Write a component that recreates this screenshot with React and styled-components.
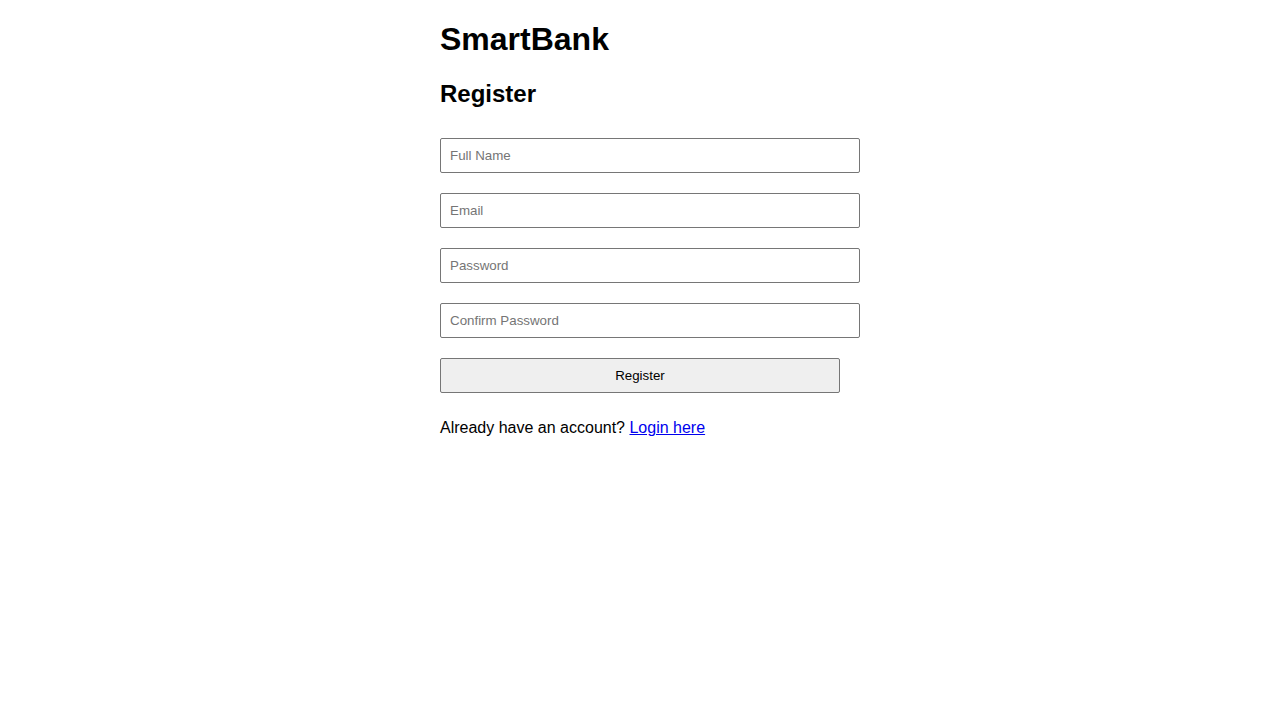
import React from 'react'
import styled, { createGlobalStyle } from 'styled-components'

const GlobalStyle = createGlobalStyle`
    body {
        margin: 0;
        background: #ffffff;
        font-family: "Liberation Sans", Arial, sans-serif;
        color: #000000;
    }
`;

const Page = styled.div`
    width: 400px;
    margin: 0 auto;
    padding-top: 21px;
`;

const Brand = styled.h1`
    font-size: 32px;
    font-weight: 700;
    margin: 0 0 22px;
`;

const Title = styled.h2`
    font-size: 24px;
    font-weight: 700;
    margin: 0 0 30px;
`;

const Form = styled.form`
    display: flex;
    flex-direction: column;
    align-items: flex-start;
    gap: 20px;
`;

const Input = styled.input`
    width: 100%;
    padding: 9px;
    font-family: "Liberation Sans", Arial, sans-serif;
    font-size: 13.33px;
    line-height: 15px;
    border: 1px solid #767676;
    border-radius: 2px;
    background: #ffffff;
    margin: 0;

    &::placeholder {
        color: #757575;
    }
`;

const Button = styled.button`
    width: 100%;
    height: 35px;
    font-family: "Liberation Sans", Arial, sans-serif;
    font-size: 13.33px;
    color: #000000;
    background: #efefef;
    border: 1px solid #767676;
    border-radius: 2px;
    margin: 0;
`;

const Footer = styled.p`
    font-size: 16px;
    margin: 26px 0 0;

    a {
        color: #0000ee;
        text-decoration: underline;
    }
`;

function App() {
    return (
        <>
            <GlobalStyle />
            <Page>
                <Brand>SmartBank</Brand>
                <Title>Register</Title>
                <Form onSubmit={(e) => e.preventDefault()}>
                    <Input type="text" placeholder="Full Name" />
                    <Input type="email" placeholder="Email" />
                    <Input type="password" placeholder="Password" />
                    <Input type="password" placeholder="Confirm Password" />
                    <Button type="submit">Register</Button>
                </Form>
                <Footer>
                    Already have an account? <a href="#login">Login here</a>
                </Footer>
            </Page>
        </>
    )
}

export default App;
